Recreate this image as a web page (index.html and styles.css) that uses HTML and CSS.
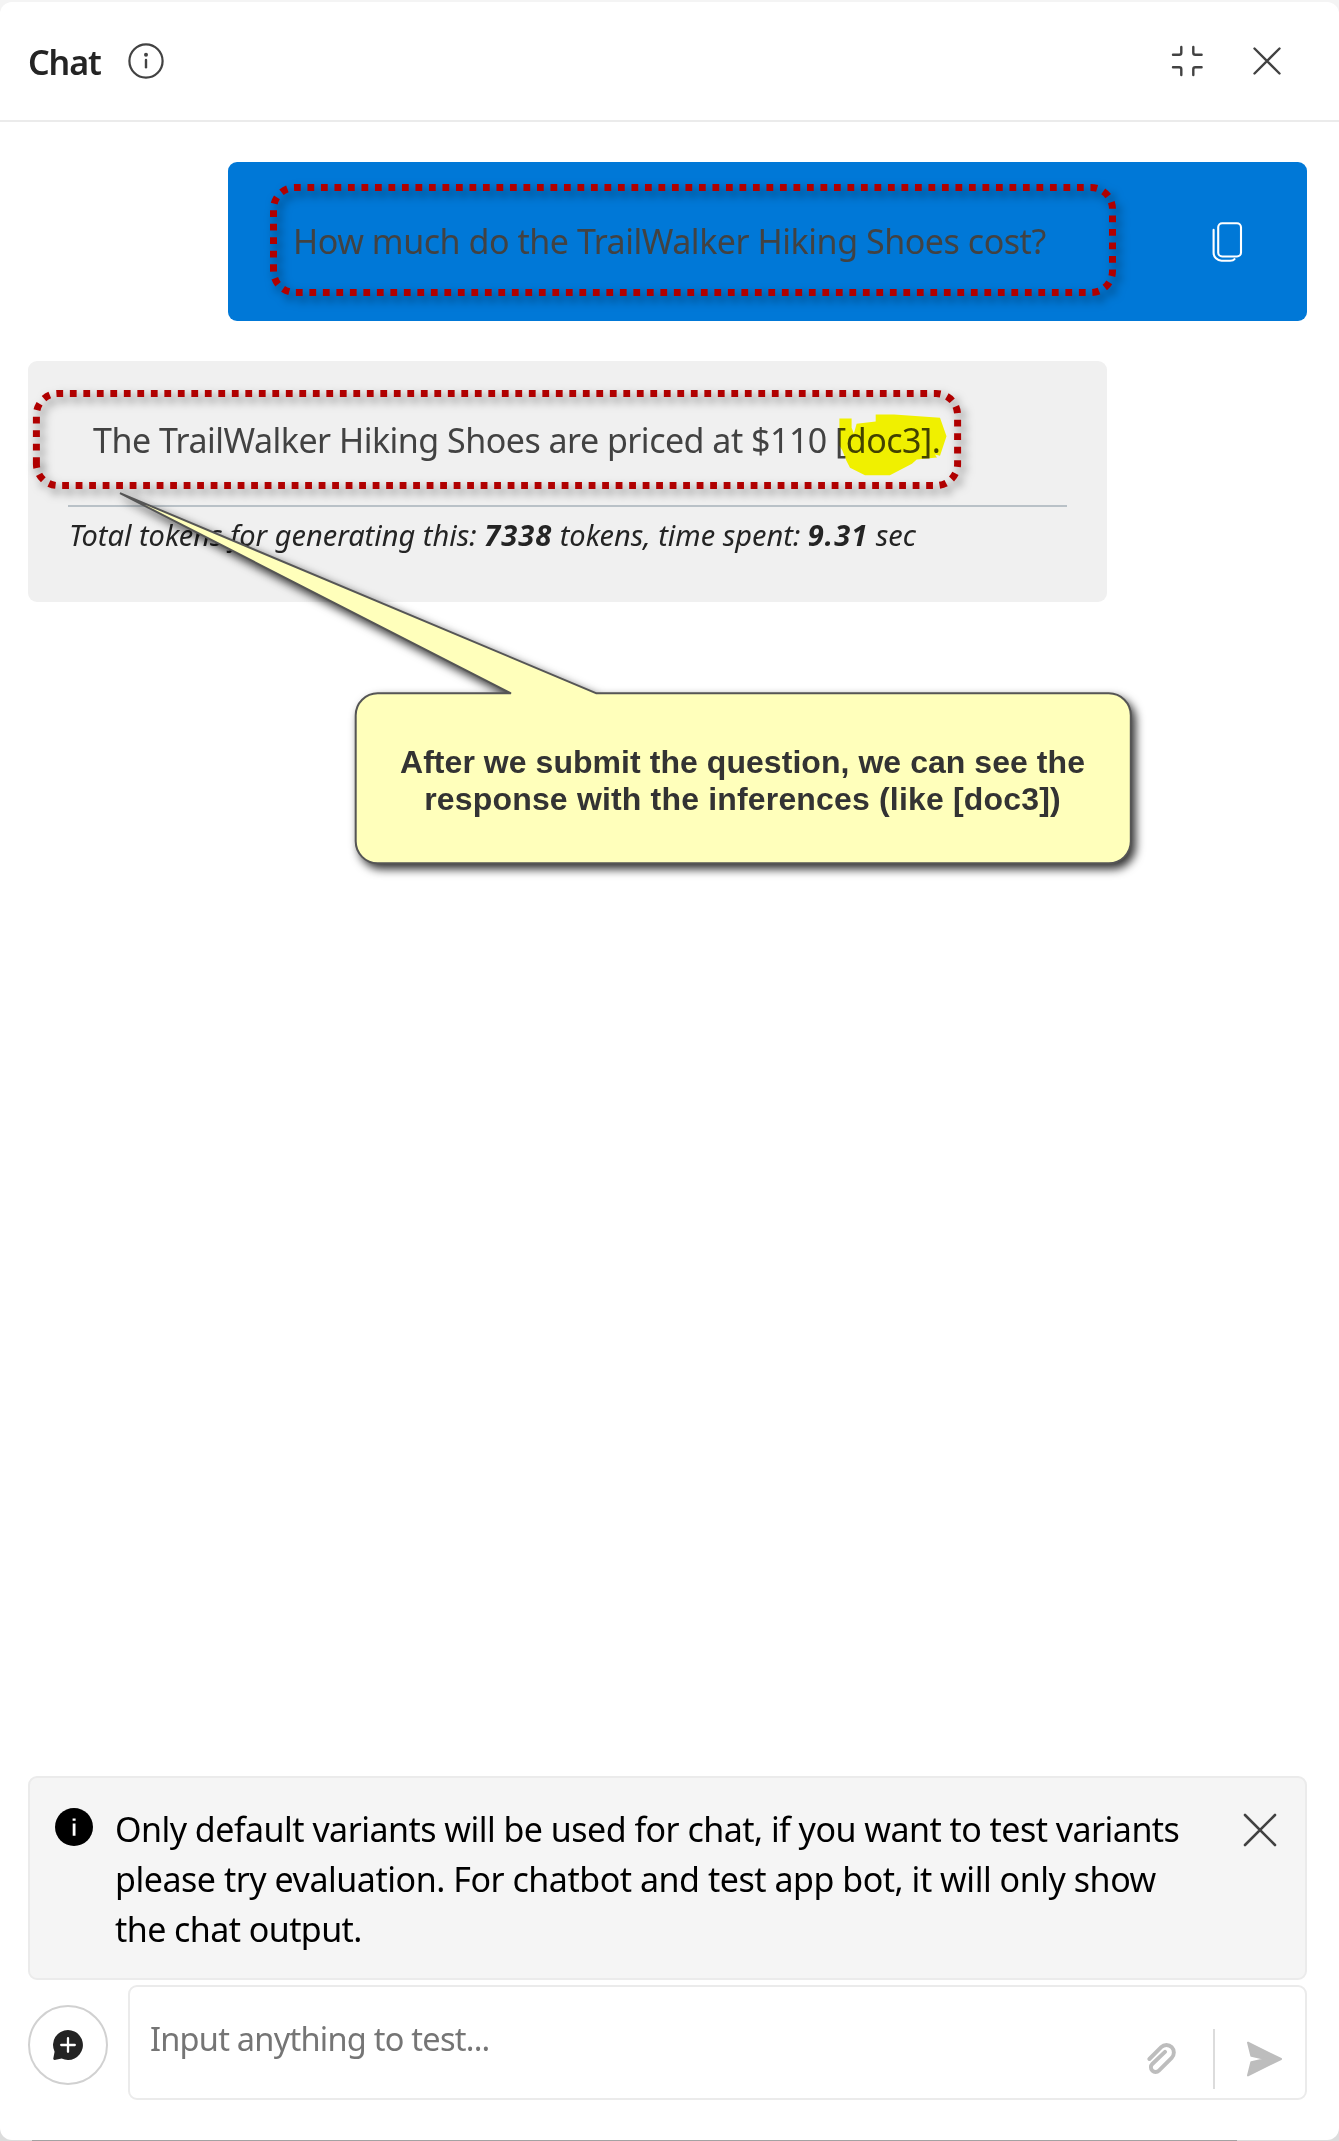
FILE: index.html
```
<!DOCTYPE html>
<html lang="en">
<head>
<meta charset="utf-8">
<title>Chat</title>
<link rel="stylesheet" href="styles.css">
</head>
<body>
<main class="panel">
  <header class="header">
    <h1 class="title">Chat</h1>
    <svg class="icon-info" width="36" height="36" viewBox="0 0 36 36" fill="none" stroke="#424242" stroke-width="2.2" stroke-linecap="round">
      <circle cx="18" cy="18" r="16.6"/>
      <path d="M18 17v7.3" stroke-width="2.4"/>
      <circle cx="18" cy="11.7" r="2" fill="#424242" stroke="none"/>
    </svg>
    <div class="header-actions">
      <svg width="32" height="32" viewBox="0 0 32 32" fill="none" stroke="#424242" stroke-width="2.4" stroke-linecap="round">
        <path d="M2 9.8h6.3a2 2 0 0 0 2-2V2M22.3 2v5.8a2 2 0 0 0 2 2h6.3M2 22.3h6.3a2 2 0 0 1 2 2V30M22.3 30v-5.7a2 2 0 0 1 2-2h6.3"/>
      </svg>
      <svg width="32" height="32" viewBox="0 0 32 32" fill="none" stroke="#424242" stroke-width="2.4" stroke-linecap="round">
        <path d="M3.5 3.5l25 25M28.5 3.5l-25 25"/>
      </svg>
    </div>
  </header>

  <section class="messages">
    <article class="bubble bubble-user">
      <p class="question">How much do the TrailWalker Hiking Shoes cost?</p>
      <svg class="icon-copy" width="32" height="42" viewBox="0 0 32 42" fill="none" stroke="#fff" stroke-width="2.1" stroke-linecap="round">
        <rect x="6.2" y="1.3" width="22.8" height="33.2" rx="4"/>
        <path d="M1.6 7.9v22.8a8 8 0 0 0 8 8h8.5c2 0 3.6-.5 4.4-1.6"/>
      </svg>
    </article>
    <article class="bubble bubble-bot">
      <p class="answer">The TrailWalker Hiking Shoes are priced at $110 [doc3].</p>
      <p class="usage">Total tokens for generating this: <b>7338</b> tokens, time spent: <b>9.31</b> sec</p>
    </article>
  </section>

  <footer class="footer">
    <div class="notice">
      <svg class="icon-notice" width="38" height="38" viewBox="0 0 38 38">
        <circle cx="19" cy="19" r="19" fill="#000"/>
        <path d="M17.6 10.4h3v2.4h-3zM17.7 15.4h2.8v12.3h-2.8z" fill="#fff"/>
      </svg>
      <p class="notice-text">
        <span class="line line-1">Only default variants will be used for chat, if you want to test variants</span>
        <span class="line line-2">please try evaluation. For chatbot and test app bot, it will only show</span>
        <span class="line line-3">the chat output.</span>
      </p>
      <svg class="icon-dismiss" width="34" height="34" viewBox="0 0 34 34" fill="none" stroke="#424242" stroke-width="2.6" stroke-linecap="round">
        <path d="M2 2l30 30M32 2L2 32"/>
      </svg>
    </div>
    <div class="composer">
      <div class="new-chat">
        <svg width="32" height="32" viewBox="0 0 32 32">
          <path d="M16 1a15 15 0 1 1-6.4 28.6l-6.9 1.3c-.9.1-1.6-.6-1.4-1.5l1.3-6.7A15 15 0 0 1 16 1z" fill="#242424"/>
          <path d="M16 9.2v13.6M9.2 16h13.6" stroke="#fff" stroke-width="2.3" stroke-linecap="round"/>
        </svg>
      </div>
      <div class="input-box">
        <span class="placeholder">Input anything to test...</span>
        <div class="input-actions">
          <svg width="30" height="34" viewBox="0 0 30 34" fill="none" stroke="#bdbdbd" stroke-width="3.9" stroke-linecap="round" stroke-linejoin="round">
            <path d="M2.4 17L14.2 5.2a7.4 7.4 0 0 1 10.5 0a7.6 7.6 0 0 1 0 10.6L11.9 28.6a4.6 4.6 0 0 1-6.6 0a4.6 4.6 0 0 1 0-6.6L18 9.8"/>
          </svg>
          <span class="separator"></span>
          <svg width="38" height="38" viewBox="0 0 38 38" fill="#bdbdbd" stroke="#bdbdbd" stroke-width="2" stroke-linejoin="round">
            <path d="M3 2.6L36 19L3 35.4L6.3 22.3L20.5 19L6.3 15.7z"/>
          </svg>
        </div>
      </div>
    </div>
  </footer>
</main>
<div class="page-edge"></div>

<svg class="marker" width="108" height="62" viewBox="839 413.5 108 62">
  <path d="M839.4 418H851.6V427.3L853.9 433L856.6 423.3L875.7 421V414H894.1L940 417.3L946.5 435.7L940 455.3L935 454L937 457L916.7 459L912 463.3L889.9 474.7H865L850 467.3L846.3 460L842.4 450L839.4 445z" fill="#ff0"/>
</svg>
<svg class="annotations" width="1339" height="900" viewBox="0 0 1339 900" fill="none">
  <g class="dotted">
    <path d="M273.5 271V209a21.5 21.5 0 0 1 21.5-21.5H1091a21.5 21.5 0 0 1 21.5 21.5V271a21.5 21.5 0 0 1-21.5 21.5H295a21.5 21.5 0 0 1-21.5-21.5"/>
    <path d="M36.4 464V415a21.5 21.5 0 0 1 21.5-21.5H936.1a21.5 21.5 0 0 1 21.5 21.5V464a21.5 21.5 0 0 1-21.5 21.5H57.9a21.5 21.5 0 0 1-21.5-21.5"/>
  </g>
  <path class="callout-shape" d="M120 493.2L596.5 693.3H1108.8a22 22 0 0 1 22 22V841.3a22 22 0 0 1-22 22H377.7a22 22 0 0 1-22-22V715.3a22 22 0 0 1 22-22H511z"/>
</svg>
<div class="callout-text">
  <span class="callout-1">After we submit the question, we can see the</span>
  <span class="callout-2">response with the inferences (like [doc3])</span>
</div>
</body>
</html>
```
FILE: styles.css
```
* { box-sizing: border-box; }

body {
  margin: 0;
  padding-top: 2px;
  position: relative;
  height: 2141px;
  overflow: hidden;
  background: linear-gradient(#f4f4f4 0 1000px, #dcdcdc 1000px);
  font-family: "Noto Sans", "Open Sans", sans-serif;
  font-size: 34px;
  line-height: 50px;
  color: #242424;
}

h1, p { margin: 0; }
svg { display: block; flex: none; }

.panel {
  display: flex;
  flex-direction: column;
  height: 2138px;
  background: #fff;
  border-radius: 12px;
  white-space: nowrap;
}

.header {
  display: flex;
  align-items: flex-start;
  height: 120px;
  padding: 34px 56px 0 28px;
  border-bottom: 2px solid #ebebeb;
}
.title {
  width: 100px;
  padding-top: 1px;
  font-size: 34px;
  font-weight: 600;
  letter-spacing: -1.1px;
}
.icon-info { margin-top: 7px; }
.header-actions {
  display: flex;
  gap: 48px;
  margin: 9px 0 0 auto;
}

.messages {
  flex: 1;
  display: flex;
  flex-direction: column;
  gap: 40px;
  padding: 40px 32px 0 28px;
}
.bubble {
  width: 1079px;
  border-radius: 9px;
}
.bubble-user {
  display: flex;
  align-self: flex-end;
  justify-content: space-between;
  height: 159px;
  padding: 54px 63px 0 65px;
  background: #0078d7;
}
.question {
  color: #424242;
  letter-spacing: -0.46px;
}
.icon-copy { margin-top: 6px; }
.bubble-bot {
  height: 241px;
  padding: 54px 40px 0;
  background: #f0f0f0;
}
.answer {
  height: 92px;
  padding-left: 25px;
  border-bottom: 2px solid #b9c1c7;
  color: #424242;
  letter-spacing: -0.51px;
}
.usage {
  padding: 8px 0 0 1px;
  font-size: 29px;
  line-height: 40px;
  font-style: italic;
}
.usage b { letter-spacing: 1px; }

.footer {
  display: flex;
  flex-direction: column;
  gap: 5px;
  padding: 0 32px 40px 28px;
}
.notice {
  display: flex;
  height: 204px;
  padding: 26px 28px 0 25px;
  border: 2px solid #ebebeb;
  border-radius: 9px;
  background: #f5f5f5;
  color: #000;
}
.icon-notice { margin: 4px 22px 0 0; }
.line { display: block; }
.line-1 { letter-spacing: -0.53px; }
.line-2 { letter-spacing: -0.47px; }
.line-3 { letter-spacing: -0.57px; }
.icon-dismiss { margin: 9px 0 0 auto; }

.composer {
  display: flex;
  gap: 20px;
  height: 115px;
}
.new-chat {
  display: flex;
  align-items: center;
  justify-content: center;
  width: 80px;
  height: 80px;
  margin-top: 20px;
  border: 2px solid #d1d1d1;
  border-radius: 50%;
}
.input-box {
  flex: 1;
  display: flex;
  justify-content: space-between;
  padding: 26px 22px 0 20px;
  border: 2px solid #ebebeb;
  border-radius: 9px;
}
.placeholder {
  padding-top: 1px;
  color: #757575;
  font-size: 32.5px;
  letter-spacing: -0.75px;
}
.input-actions {
  display: flex;
  align-items: center;
  height: 60px;
  margin-top: 16px;
}
.separator {
  width: 2px;
  height: 60px;
  margin: 0 30px 0 36px;
  background: #dcdcdc;
}

.page-edge {
  height: 1px;
  margin: 0 102px 0 32px;
  background: #a3a3a3;
}

.marker {
  position: absolute;
  top: 413.5px;
  left: 839px;
  mix-blend-mode: multiply;
}
.annotations {
  position: absolute;
  top: 0;
  left: 0;
}
.dotted {
  stroke: #b00000;
  stroke-width: 7;
  stroke-dasharray: 6.8 6.7;
  filter: drop-shadow(4px 5px 5px rgba(0, 0, 0, 0.5));
}
.callout-shape {
  fill: #ffffbb;
  stroke: #555;
  stroke-width: 2;
  stroke-linejoin: bevel;
  filter: drop-shadow(4px 5px 5px rgba(0, 0, 0, 0.8));
}
.callout-text {
  position: absolute;
  top: 693px;
  left: 355px;
  width: 775px;
  height: 170px;
  display: flex;
  flex-direction: column;
  align-items: center;
  justify-content: center;
  padding-top: 5px;
  color: #333;
  font: bold 32px/37px "Liberation Sans", Arial, sans-serif;
  white-space: nowrap;
}
.callout-1 { letter-spacing: 0.05px; }
.callout-2 { letter-spacing: 0.17px; }
```
